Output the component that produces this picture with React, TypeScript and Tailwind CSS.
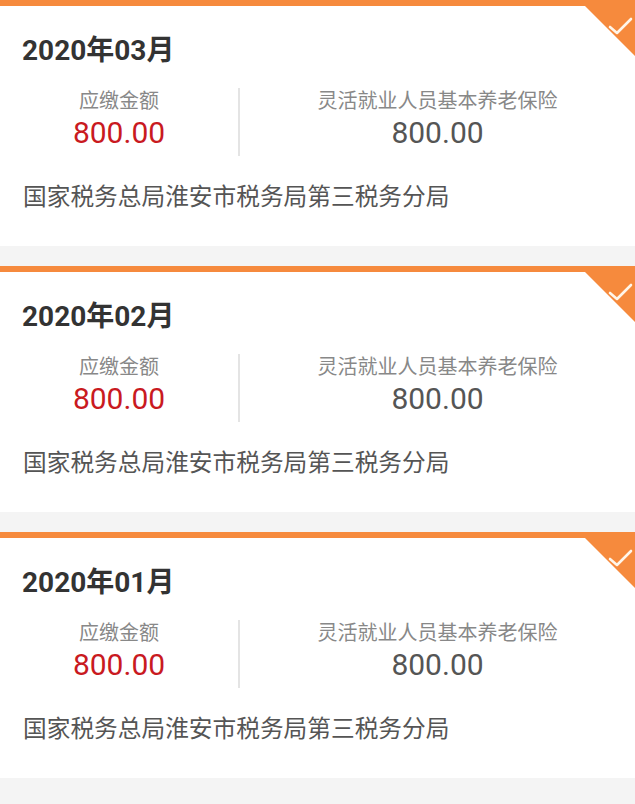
const records = [
  { month: "2020年03月" },
  { month: "2020年02月" },
  { month: "2020年01月" },
];

function PaidBadge() {
  return (
    <svg
      className="absolute right-0 top-[-6px]"
      width="56"
      height="56"
      viewBox="0 0 56 56"
    >
      <polygon points="0,0 56,0 56,56" fill="#f68a3d" />
      <path
        d="M31 27 L38 33 L52 19"
        fill="none"
        stroke="#fff6ea"
        strokeWidth="2.6"
        strokeLinecap="round"
        strokeLinejoin="round"
      />
    </svg>
  );
}

export default function App() {
  return (
    <div
      className="min-h-[804px] w-[635px] bg-[#f4f4f4] pb-[26px]"
      style={{ fontFamily: 'Roboto, "Noto Sans CJK SC", sans-serif' }}
    >
      <div className="flex flex-col gap-[20px]">
        {records.map((r) => (
          <div
            key={r.month}
            className="relative h-[246px] border-t-[6px] border-[#f68a3d] bg-white"
          >
            <PaidBadge />
            <div className="pl-[22px] pt-[27px] text-[28px] font-bold leading-[36px] text-[#333]">
              {r.month}
            </div>
            <div className="mt-[19px] flex h-[68px]">
              <div className="flex w-[238px] flex-col items-center">
                <p className="text-[20px] leading-[26px] text-[#888]">应缴金额</p>
                <p className="mt-[1px] text-[30px] leading-[36px] text-[#c91a1f]">800.00</p>
              </div>
              <div className="w-[2px] bg-[#e4e4e4]" />
              <div className="flex flex-1 flex-col items-center">
                <p className="text-[20px] leading-[26px] text-[#888]">
                  灵活就业人员基本养老保险
                </p>
                <p className="mt-[1px] text-[30px] leading-[36px] text-[#555]">800.00</p>
              </div>
            </div>
            <p className="mt-[25px] pl-[23px] text-[23.7px] leading-[32px] text-[#555]">
              国家税务总局淮安市税务局第三税务分局
            </p>
          </div>
        ))}
      </div>
    </div>
  );
}
